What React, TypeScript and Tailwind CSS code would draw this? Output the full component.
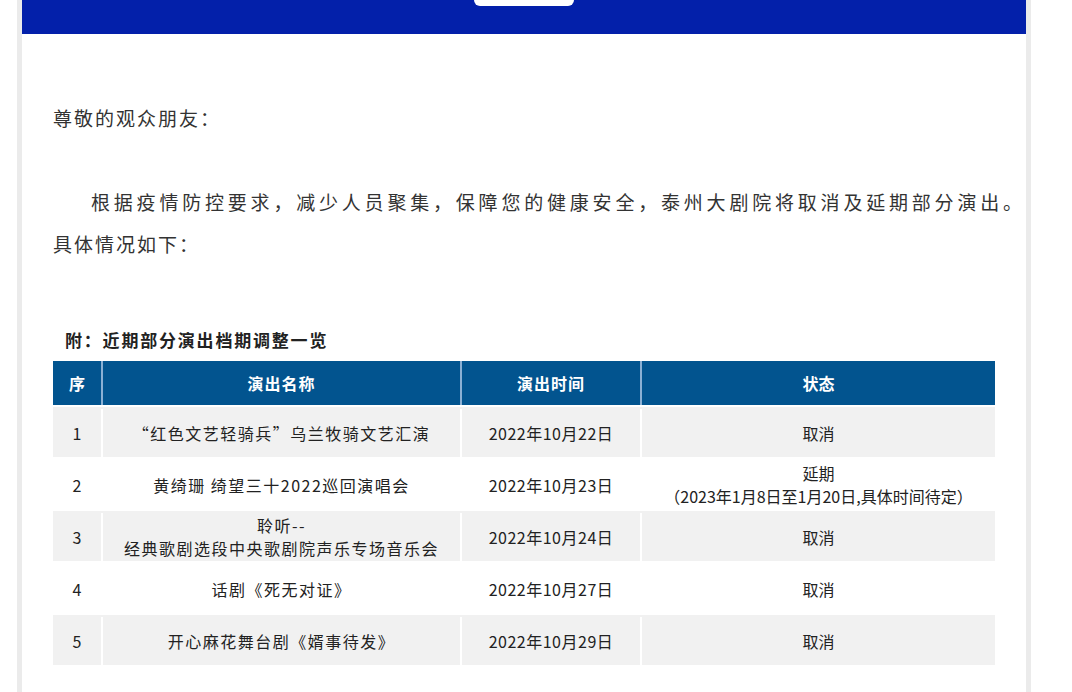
import React from "react";

const rows: { n: string; name: React.ReactNode; date: string; status: React.ReactNode; gray: boolean }[] = [
  { n: "1", name: "“红色文艺轻骑兵”乌兰牧骑文艺汇演", date: "2022年10月22日", status: "取消", gray: true },
  {
    n: "2",
    name: "黄绮珊 绮望三十2022巡回演唱会",
    date: "2022年10月23日",
    status: (
      <>
        <div>延期</div>
        <div>（2023年1月8日至1月20日,具体时间待定）</div>
      </>
    ),
    gray: false,
  },
  {
    n: "3",
    name: (
      <>
        <div>聆听--</div>
        <div>经典歌剧选段中央歌剧院声乐专场音乐会</div>
      </>
    ),
    date: "2022年10月24日",
    status: "取消",
    gray: true,
  },
  { n: "4", name: "话剧《死无对证》", date: "2022年10月27日", status: "取消", gray: false },
  { n: "5", name: "开心麻花舞台剧《婿事待发》", date: "2022年10月29日", status: "取消", gray: true },
];

export default function App() {
  const font = { fontFamily: '"Noto Sans CJK SC", "Noto Sans", sans-serif' };
  return (
    <div className="w-[1072px] h-[692px] bg-white overflow-hidden" style={font}>
      <div className="ml-[17px] w-[1014px] h-[692px] border-x-[5px] border-[#ebebeb]">
        <div className="h-[34px] bg-[#0320aa] flex justify-center">
          <div className="w-[100px] h-[6px] bg-white rounded-b-[8px]" />
        </div>
        <div className="pl-[31px] pr-[12px] pt-[63px] text-[#333] text-[19px] leading-[42px]">
          <p className="tracking-[2px]">尊敬的观众朋友：</p>
          <p className="h-[42px]"></p>
          <p className="tracking-[3.8px] indent-[38px] whitespace-nowrap">
            根据疫情防控要求，减少人员聚集，保障您的健康安全，泰州大剧院将取消及延期部分演出。
          </p>
          <p className="tracking-[2px]">具体情况如下：</p>
          <div className="h-[64px]" />
          <div className="pl-[12px] text-[17px] leading-[22px] font-bold tracking-[1.8px] text-[#222]">
            附：近期部分演出档期调整一览
          </div>
          <div className="h-[10px]" />
          <div className="w-[942px] text-[16px] leading-[23px]">
            <div className="flex h-[44px] bg-[#02548f] text-white font-bold items-center">
              <div className="w-[48px] h-full flex items-center justify-center">序</div>
              <div className="w-[359px] h-full flex items-center justify-center border-l-2 border-[#8bb0d4] tracking-[1px]">演出名称</div>
              <div className="w-[180px] h-full flex items-center justify-center border-l-2 border-[#8bb0d4] tracking-[1px]">演出时间</div>
              <div className="flex-1 h-full flex items-center justify-center border-l-2 border-[#8bb0d4]">状态</div>
            </div>
            {rows.map((r) => (
              <div
                key={r.n}
                className={`flex h-[50px] mt-[2px] pt-[2px] text-[#222] text-center ${r.gray ? "bg-[#f1f1f1]" : "bg-white"}`}
              >
                <div className="w-[48px] flex items-center justify-center">{r.n}</div>
                <div className="w-[359px] flex flex-col items-center justify-center border-l-2 border-white tracking-[1.5px]">{r.name}</div>
                <div className="w-[180px] flex items-center justify-center border-l-2 border-white tracking-[0.5px]">{r.date}</div>
                <div className="flex-1 flex flex-col items-center justify-center border-l-2 border-white">{r.status}</div>
              </div>
            ))}
          </div>
        </div>
      </div>
    </div>
  );
}
